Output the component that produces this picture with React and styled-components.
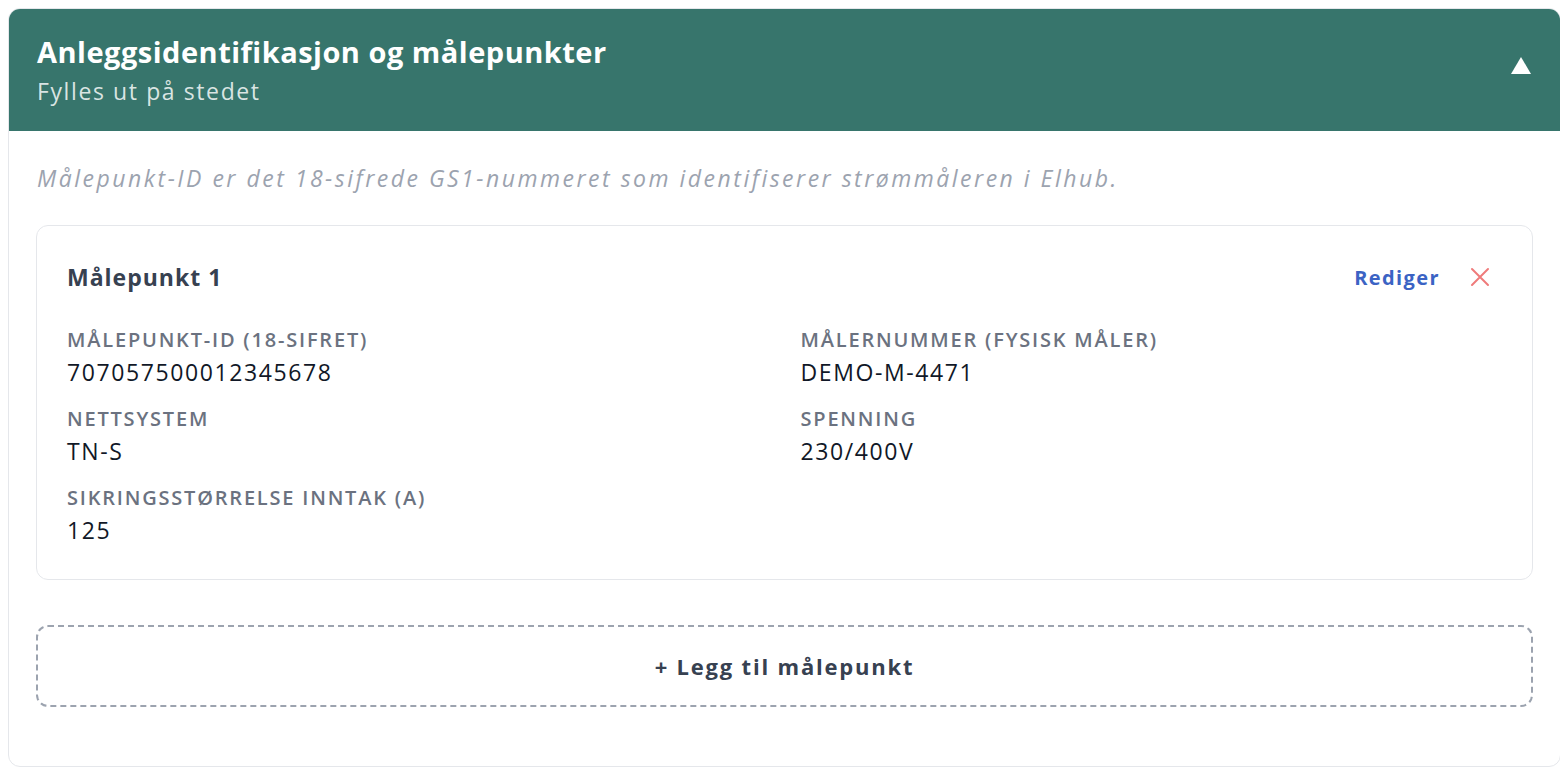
import React from "react";
import styled, { createGlobalStyle } from "styled-components";

const GlobalStyle = createGlobalStyle`
  body {
    margin: 8px;
    background: #ffffff;
    font-family: "Open Sans", "Noto Sans", sans-serif;
  }
  * {
    box-sizing: border-box;
  }
`;

const fields = [
  { label: "Målepunkt-ID (18-sifret)", value: "707057500012345678" },
  { label: "Målernummer (fysisk måler)", value: "DEMO-M-4471" },
  { label: "Nettsystem", value: "TN-S" },
  { label: "Spenning", value: "230/400V" },
  { label: "Sikringsstørrelse inntak (A)", value: "125" },
];

const App = () => {
  return (
    <>
      <GlobalStyle />
      <Section>
        <Header>
          <HeaderText>
            <Title>Anleggsidentifikasjon og målepunkter</Title>
            <Subtitle>Fylles ut på stedet</Subtitle>
          </HeaderText>
          <Toggle aria-label="Skjul">
            <svg width="20" height="17" viewBox="0 0 20 17">
              <path d="M10 0 L20 17 L0 17 Z" fill="currentColor" />
            </svg>
          </Toggle>
        </Header>
        <Body>
          <Hint>
            Målepunkt-ID er det 18-sifrede GS1-nummeret som identifiserer
            strømmåleren i Elhub.
          </Hint>
          <PointCard>
            <PointHead>
              <PointTitle>Målepunkt 1</PointTitle>
              <Actions>
                <EditButton>Rediger</EditButton>
                <RemoveButton aria-label="Fjern">
                  <svg width="20" height="20" viewBox="0 0 20 20">
                    <path
                      d="M2 2 L18 18 M18 2 L2 18"
                      stroke="currentColor"
                      strokeWidth="2"
                      strokeLinecap="round"
                    />
                  </svg>
                </RemoveButton>
              </Actions>
            </PointHead>
            <FieldGrid>
              {fields.map(field => (
                <Field key={field.label}>
                  <FieldLabel>{field.label}</FieldLabel>
                  <FieldValue>{field.value}</FieldValue>
                </Field>
              ))}
            </FieldGrid>
          </PointCard>
          <AddButton>+ Legg til målepunkt</AddButton>
        </Body>
      </Section>
    </>
  );
};

export default App;

const Section = styled.section`
  width: 1553px;
  border: 1px solid #e5e7eb;
  border-radius: 12px;
  overflow: hidden;
  background: #ffffff;
`;

const Header = styled.div`
  background: #37756c;
  height: 122px;
  padding: 0 28px;
  display: flex;
  align-items: center;
  justify-content: space-between;
`;

const HeaderText = styled.div`
  display: flex;
  flex-direction: column;
  gap: 7px;
`;

const Title = styled.h2`
  margin: 0;
  font-size: 29px;
  line-height: 34px;
  font-weight: 700;
  letter-spacing: 0.5px;
  color: #ffffff;
`;

const Subtitle = styled.div`
  font-size: 23px;
  line-height: 30px;
  letter-spacing: 1.6px;
  color: rgba(255, 255, 255, 0.82);
`;

const Toggle = styled.span`
  display: flex;
  color: #ffffff;
  margin: 0 1px 0 0;
  transform: translateY(-5px);
`;

const Body = styled.div`
  padding: 30px 27px 59px;
  display: flex;
  flex-direction: column;
`;

const Hint = styled.p`
  margin: 0 0 30px 1px;
  font-size: 23px;
  line-height: 34px;
  font-style: italic;
  letter-spacing: 2.5px;
  color: #9ca3af;
`;

const PointCard = styled.div`
  border: 1px solid #e5e7eb;
  border-radius: 12px;
  padding: 36px 30px 33px;
  margin-bottom: 45px;
`;

const PointHead = styled.div`
  display: flex;
  align-items: center;
  justify-content: space-between;
  margin-bottom: 32px;
`;

const PointTitle = styled.h3`
  margin: 0;
  font-size: 23px;
  line-height: 30px;
  font-weight: 700;
  letter-spacing: 1px;
  color: #374151;
`;

const Actions = styled.div`
  display: flex;
  align-items: center;
  gap: 30px;
  margin-right: 12px;
`;

const EditButton = styled.button`
  border: 0;
  background: none;
  padding: 0;
  font-family: inherit;
  font-size: 20px;
  font-weight: 700;
  letter-spacing: 1.4px;
  color: #3b63c4;
  cursor: pointer;
`;

const RemoveButton = styled.button`
  border: 0;
  background: none;
  padding: 0;
  display: flex;
  color: #ef7b7b;
  cursor: pointer;
`;

const FieldGrid = styled.div`
  display: grid;
  grid-template-columns: 1fr 1fr;
  column-gap: 32px;
  row-gap: 15px;
`;

const Field = styled.div`
  display: flex;
  flex-direction: column;
`;

const FieldLabel = styled.div`
  font-size: 20px;
  line-height: 32px;
  font-weight: 600;
  letter-spacing: 1.8px;
  text-transform: uppercase;
  color: #6b7280;
`;

const FieldValue = styled.div`
  font-size: 23px;
  line-height: 32px;
  letter-spacing: 1.6px;
  color: #111827;
`;

const AddButton = styled.button`
  height: 82px;
  border: 2px dashed #9ca3af;
  border-radius: 12px;
  background: #ffffff;
  font-family: inherit;
  font-size: 22px;
  font-weight: 700;
  letter-spacing: 1.8px;
  color: #374151;
  cursor: pointer;
`;
